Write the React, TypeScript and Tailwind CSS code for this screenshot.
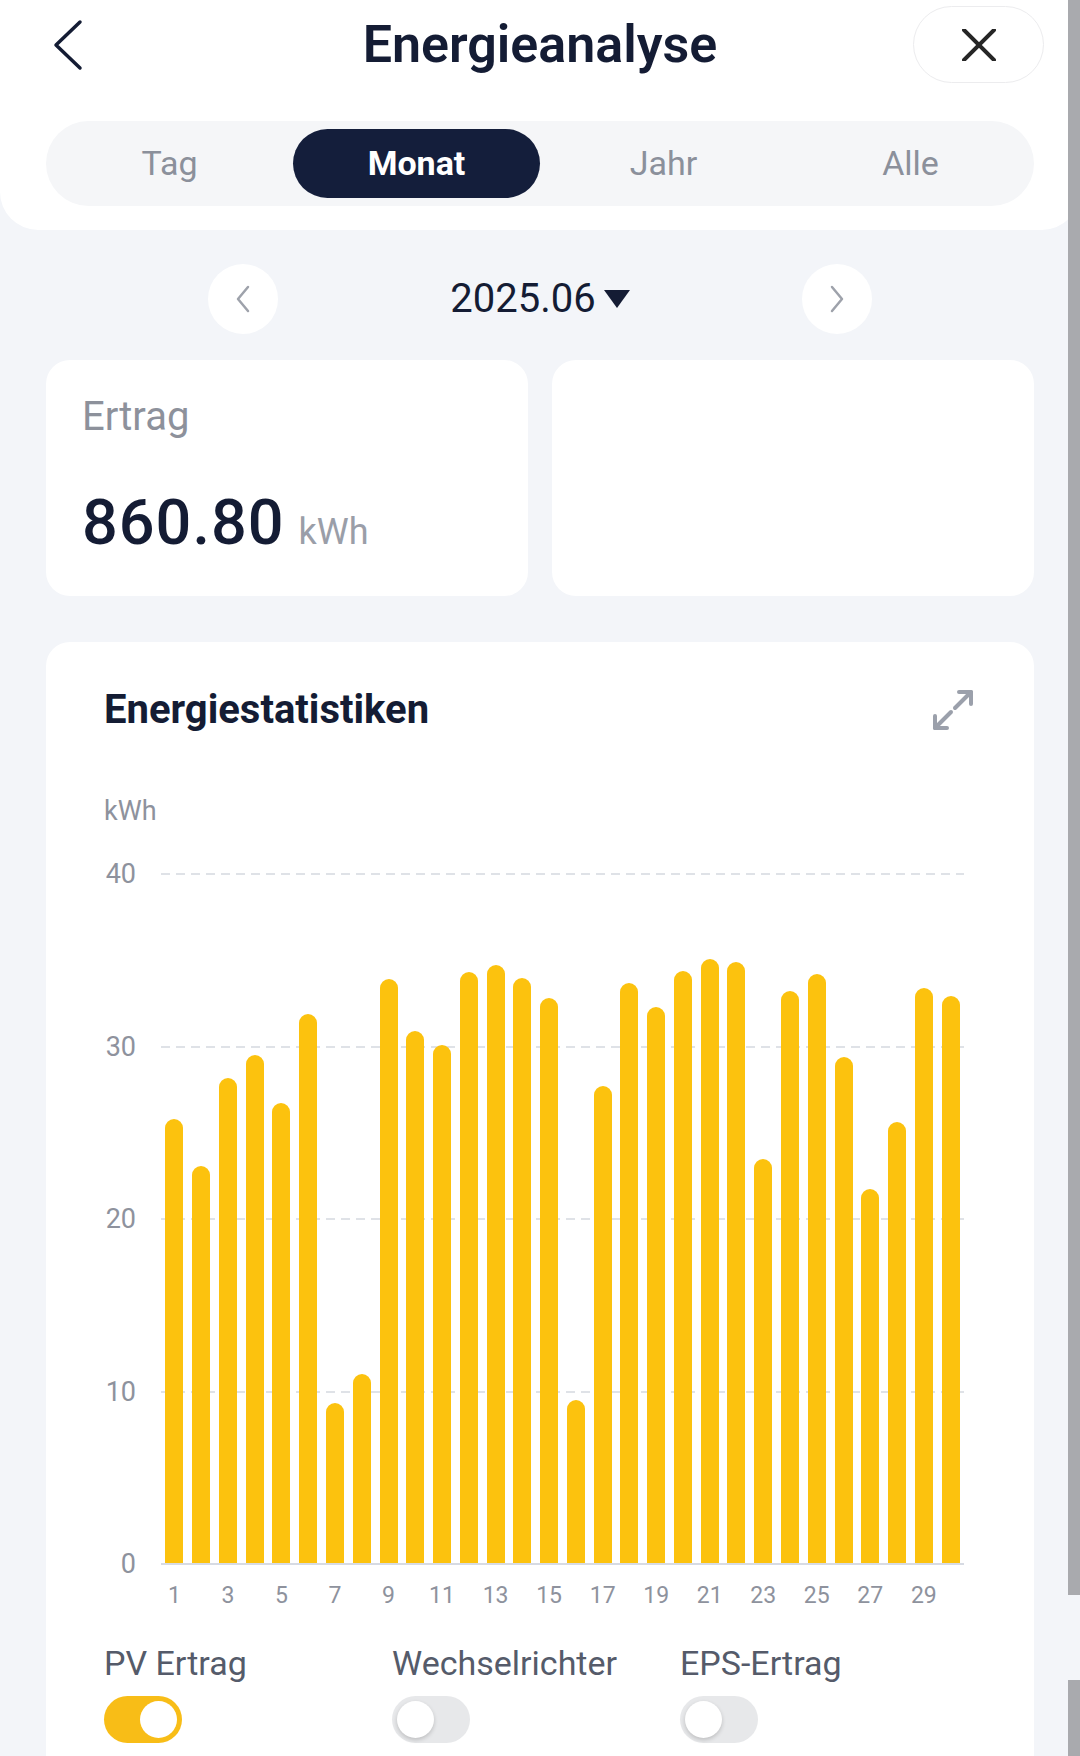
import React from "react"

const days = [25.8, 23.05, 28.2, 29.5, 26.7, 31.9, 9.35, 11, 33.9, 30.9, 30.1, 34.3, 34.7, 34, 32.8, 9.5, 27.7, 33.7, 32.3, 34.4, 35.1, 34.9, 23.5, 33.2, 34.2, 29.4, 21.75, 25.6, 33.4, 32.9]
const tabs = ["Tag", "Monat", "Jahr", "Alle"]
const yTicks = [40, 30, 20, 10, 0]

const Toggle = ({ on }: { on?: boolean }) => (
  <div className={"flex h-[47px] w-[78px] items-center rounded-full px-[5px] " + (on ? "justify-end bg-[#f8bd17]" : "justify-start bg-[#e7e8ea]")}>
    <div className={"h-[37px] w-[37px] rounded-full bg-white" + (on ? "" : " shadow-[0_2px_4px_rgba(0,0,0,0.18)]")} />
  </div>
)

const Chart = () => (
  <div className="mt-[47px]">
    <div className="flex">
      <div className="relative h-[690px] w-[32px]">
        {yTicks.map((t, i) => (
          <span key={t} className="absolute right-0 -translate-y-1/2 text-[27px] leading-[32px] text-[#8e929d]" style={{ top: `${i * 25}%` }}>
            {t}
          </span>
        ))}
      </div>
      <div className="relative ml-[25px] h-[690px] w-[803px]">
        {[0, 25, 50, 75].map((p) => (
          <div key={p} className="absolute left-0 right-0 h-[2px] -translate-y-1/2 bg-[repeating-linear-gradient(90deg,#dfe2e7_0_9px,transparent_9px_15px)]" style={{ top: `${p}%` }} />
        ))}
        <div className="absolute inset-0 flex items-end">
          {days.map((v, i) => (
            <div key={i} className="flex h-full flex-1 items-end justify-center">
              <div className="w-[18px] rounded-t-full bg-[#fcc20e]" style={{ height: `${(v / 40) * 100}%` }} />
            </div>
          ))}
        </div>
        <div className="absolute bottom-0 left-0 right-0 h-[2px] translate-y-1/2 bg-[#d7dbe3]" />
      </div>
    </div>
    <div className="ml-[57px] mt-[18px] flex w-[803px]">
      {days.map((_, i) => (
        <div key={i} className="flex-1 text-center text-[23px] leading-[28px] text-[#8e929d]">
          {i % 2 === 0 ? i + 1 : ""}
        </div>
      ))}
    </div>
  </div>
)

export default function App() {
  return (
    <div className="relative h-[1756px] w-[1080px] overflow-hidden bg-[#f3f5f9] font-['Roboto','Liberation_Sans',sans-serif]">
      {/* header */}
      <div className="rounded-b-[38px] bg-white px-[46px] pb-[24px] pt-[6px]">
        <div className="grid h-[77px] grid-cols-[1fr_auto_1fr] items-center">
          <div className="pl-[7px]">
            <svg width="30" height="52" viewBox="0 0 30 52" fill="none">
              <polyline points="27,3 3,26 27,49" stroke="#141c34" strokeWidth="3.5" strokeLinecap="round" strokeLinejoin="round" />
            </svg>
          </div>
          <h1 className="text-[52px] font-semibold leading-none text-[#141c34]">Energieanalyse</h1>
          <div className="flex justify-end">
            <button className="mr-[-10px] flex h-[77px] w-[131px] items-center justify-center rounded-full border border-[#ececee] bg-white">
              <svg width="34" height="32" viewBox="0 0 34 32" fill="none">
                <line x1="2" y1="1" x2="32" y2="31" stroke="#262626" strokeWidth="4" strokeLinecap="round" />
                <line x1="32" y1="1" x2="2" y2="31" stroke="#262626" strokeWidth="4" strokeLinecap="round" />
              </svg>
            </button>
          </div>
        </div>
        <div className="mt-[38px] flex rounded-full bg-[#f5f6f8] py-[8px]">
          {tabs.map((t) => (
            <div
              key={t}
              className={"flex h-[69px] flex-1 items-center justify-center rounded-full text-[34px] " + (t === "Monat" ? "bg-[#141e3b] font-bold text-white" : "text-[#8b909b]")}
            >
              {t}
            </div>
          ))}
        </div>
      </div>

      {/* date selector */}
      <div className="mx-auto mt-[34px] flex w-[664px] items-center justify-between">
        <div className="flex h-[70px] w-[70px] items-center justify-center rounded-full bg-white">
          <svg width="14" height="28" viewBox="0 0 14 28" fill="none">
            <polyline points="12,2 2,14 12,26" stroke="#9ea2ab" strokeWidth="2.5" strokeLinecap="round" strokeLinejoin="round" />
          </svg>
        </div>
        <div className="flex items-center gap-[8px]">
          <span className="text-[40px] leading-none text-[#141c34]">2025.06</span>
          <svg width="26" height="20" viewBox="0 0 26 20">
            <polygon points="0,1 26,1 13,19" fill="#141c34" />
          </svg>
        </div>
        <div className="flex h-[70px] w-[70px] items-center justify-center rounded-full bg-white">
          <svg width="14" height="28" viewBox="0 0 14 28" fill="none">
            <polyline points="2,2 12,14 2,26" stroke="#9ea2ab" strokeWidth="2.5" strokeLinecap="round" strokeLinejoin="round" />
          </svg>
        </div>
      </div>

      {/* summary cards */}
      <div className="mt-[26px] grid grid-cols-2 gap-[24px] px-[46px]">
        <div className="h-[236px] rounded-[24px] bg-white px-[36px] pt-[34px]">
          <p className="text-[40px] leading-[46px] text-[#8d919b]">Ertrag</p>
          <p className="mt-[51px] flex items-baseline gap-[14px]">
            <span className="text-[63px] font-medium leading-none tracking-[1px] text-[#141c34]">860.80</span>
            <span className="text-[36px] leading-none text-[#9a9ea8]">kWh</span>
          </p>
        </div>
        <div className="h-[236px] rounded-[24px] bg-white" />
      </div>

      {/* chart card */}
      <div className="mx-[46px] mt-[46px] h-[1200px] rounded-[24px] bg-white pl-[58px] pt-[43px]">
        <div className="flex items-center justify-between pr-[60px]">
          <h2 className="text-[40px] font-bold leading-[50px] text-[#141c34]">Energiestatistiken</h2>
          <svg width="42" height="42" viewBox="0 0 42 42" fill="none" stroke="#9ba0ab" strokeWidth="4" strokeLinecap="round" strokeLinejoin="round">
            <line x1="23" y1="19" x2="39" y2="3" />
            <polyline points="27,3 39,3 39,15" />
            <line x1="19" y1="23" x2="3" y2="39" />
            <polyline points="3,27 3,39 15,39" />
          </svg>
        </div>
        <p className="mt-[60px] text-[27px] leading-[32px] text-[#8e929d]">kWh</p>
        <Chart />
        <div className="mt-[33px] flex">
          {[
            ["PV Ertrag", true],
            ["Wechselrichter", false],
            ["EPS-Ertrag", false],
          ].map(([label, on]) => (
            <div key={label as string} className="w-[288px]">
              <p className="text-[34px] leading-[40px] text-[#555b6a]">{label}</p>
              <div className="mt-[13px]">
                <Toggle on={on as boolean} />
              </div>
            </div>
          ))}
        </div>
      </div>

      {/* overlay scrollbar */}
      <div className="absolute right-0 top-0 flex h-full w-[12px] flex-col">
        <div className="h-[1595px] bg-[#a9aaae]" />
        <div className="h-[85px]" />
        <div className="flex-1 bg-[#a9aaae]" />
      </div>
    </div>
  )
}
